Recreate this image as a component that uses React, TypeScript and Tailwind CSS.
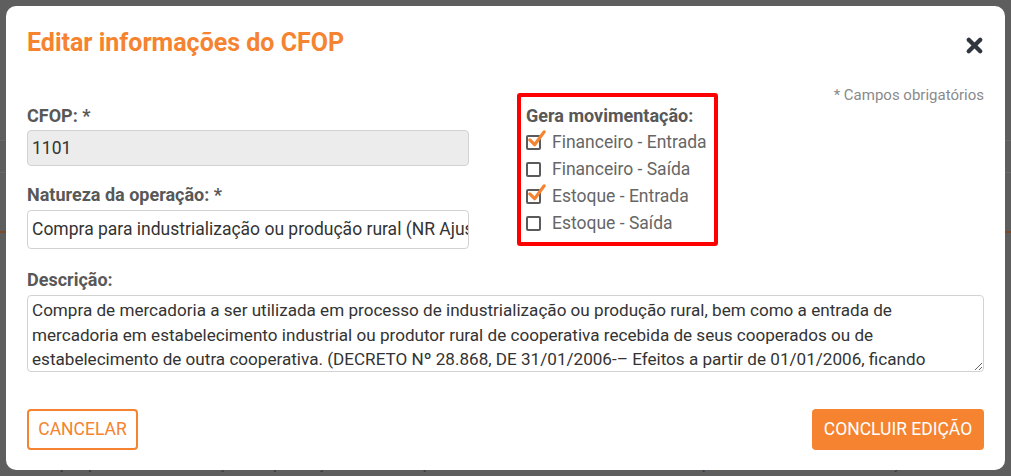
import { X } from 'lucide-react'

const options = [
  { label: 'Financeiro - Entrada', checked: true },
  { label: 'Financeiro - Saída', checked: false },
  { label: 'Estoque - Entrada', checked: true },
  { label: 'Estoque - Saída', checked: false },
]

const descricao =
  'Compra de mercadoria a ser utilizada em processo de industrialização ou produção rural, bem como a entrada de mercadoria em estabelecimento industrial ou produtor rural de cooperativa recebida de seus cooperados ou de estabelecimento de outra cooperativa. (DECRETO Nº 28.868, DE 31/01/2006-– Efeitos a partir de 01/01/2006, ficando'

function CheckBox({ checked }: { checked: boolean }) {
  return (
    <span className="relative inline-block size-[15px] shrink-0 rounded-[2px] border-2 border-[#5a5a5a] bg-white">
      {checked && (
        <svg
          viewBox="0 0 20 20"
          className="absolute -top-[7px] -left-[1px] size-[19px]"
        >
          <path
            d="M3 10.5 L8 15.5 L18 2"
            fill="none"
            stroke="#f5832f"
            strokeWidth="3.4"
            strokeLinecap="round"
            strokeLinejoin="round"
          />
        </svg>
      )}
    </span>
  )
}

export default function App() {
  return (
    <div className="relative h-[476px] w-[1011px] overflow-hidden bg-[#5e5e5e] font-['Roboto',sans-serif]">
      {/* page behind the backdrop */}
      <div className="flex h-full flex-col pt-[140px] text-[17px] text-[#3a3a3a]">
        <div className="h-[47px] border-y border-[#686868]" />
        <div className="mt-[58px] h-[2px] bg-[#7a4a2a]" />
        <div className="mt-[218px] pl-[24px] whitespace-nowrap">
          Compra para industrialização ou produção rural Compra de mercadoria a ser utilizada em processo de industrialização Ef
        </div>
      </div>

      <div className="absolute top-[6px] left-[6px] flex h-[464px] w-[999px] flex-col rounded-[10px] bg-white px-[21px] pt-[22px]">
        <div className="flex items-start justify-between">
          <h1 className="text-[25px] leading-[30px] font-bold text-[#f5832f]">
            Editar informações do CFOP
          </h1>
          <X className="mt-[6px] mr-[-2px] size-[23px] text-[#2f3640]" strokeWidth={4.5} />
        </div>

        <div className="mt-[28px] flex justify-end text-[15px] leading-[18px] text-[#8a8a8a]">
          * Campos obrigatórios
        </div>

        <div className="mt-[-11px] flex">
          <div className="flex w-[442px] flex-col pt-[12px]">
            <label className="text-[18px] leading-[21px] font-bold text-[#585858]">
              CFOP: *
            </label>
            <div className="mt-[4px] flex h-[36px] items-center rounded-[4px] border border-[#d2d2d2] bg-[#ececec] px-[4px] text-[17.5px] text-[#333]">
              1101
            </div>
            <label className="mt-[18px] text-[18px] leading-[21px] font-bold text-[#585858]">
              Natureza da operação: *
            </label>
            <div className="mt-[5px] flex h-[39px] items-center overflow-hidden rounded-[4px] border border-[#d2d2d2] bg-white px-[4px] text-[17.5px] whitespace-nowrap text-[#333]">
              Compra para industrialização ou produção rural (NR Ajuste)
            </div>
          </div>

          <div className="ml-[48px] flex h-[153px] w-[201px] flex-col rounded-[3px] border-[4px] border-[#ff0000] px-[5px] pt-[8px]">
            <span className="text-[18px] leading-[21px] font-bold text-[#585858]">
              Gera movimentação:
            </span>
            <div className="mt-[7px] flex flex-col gap-[8px]">
              {options.map((o) => (
                <div key={o.label} className="flex h-[19px] items-center gap-[11px]">
                  <CheckBox checked={o.checked} />
                  <span className="text-[17.5px] leading-[19px] text-[#666]">
                    {o.label}
                  </span>
                </div>
              ))}
            </div>
          </div>
        </div>

        <label className="mt-[20px] text-[18px] leading-[21px] font-bold text-[#585858]">
          Descrição:
        </label>
        <textarea
          readOnly
          value={descricao}
          className="mt-[5px] h-[77px] w-full resize-y overflow-hidden rounded-[4px] border border-[#d2d2d2] bg-white pt-[2px] pr-[24px] pl-[4px] text-[17.1px] leading-[24.5px] text-[#333] outline-none"
        />

        <div className="mt-[37px] flex items-center justify-between">
          <button className="h-[41px] w-[111px] rounded-[4px] border-2 border-[#f5832f] bg-white text-[17.5px] text-[#f5832f]">
            CANCELAR
          </button>
          <button className="h-[41px] w-[172px] rounded-[4px] bg-[#f5832f] text-[17.5px] text-white">
            CONCLUIR EDIÇÃO
          </button>
        </div>
      </div>
    </div>
  )
}
